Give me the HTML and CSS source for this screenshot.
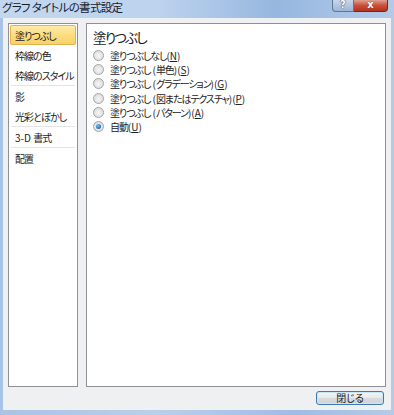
FILE: index.html
```html
<!DOCTYPE html>
<html lang="ja">
<head>
<meta charset="utf-8">
<link rel="stylesheet" href="styles.css">
</head>
<body>
<div class="window">
  <div class="titlebar">
    <span class="title">グラフ タイトルの書式設定</span>
    <div class="caption-buttons">
      <div class="cap help">?</div>
      <div class="cap close">x</div>
    </div>
  </div>
  <div class="content">
    <div class="panels">
      <ul class="nav">
        <li class="item active">塗りつぶし</li>
        <li class="item">枠線の色</li>
        <li class="item">枠線のスタイル</li>
        <li class="sep"></li>
        <li class="item">影</li>
        <li class="item">光彩とぼかし</li>
        <li class="sep"></li>
        <li class="item"><span class="lat">3-D </span>書式</li>
        <li class="sep"></li>
        <li class="item">配置</li>
      </ul>
      <div class="main">
        <div class="heading">塗りつぶし</div>
        <div class="options">
          <div class="opt"><span class="radio"></span><span>塗りつぶしなし<span class="lat">(<u>N</u>)</span></span></div>
          <div class="opt"><span class="radio"></span><span>塗りつぶし<span class="lat"> (</span>単色<span class="lat">)(<u>S</u>)</span></span></div>
          <div class="opt"><span class="radio"></span><span>塗りつぶし<span class="lat"> (</span>グラデーション<span class="lat">)(<u>G</u>)</span></span></div>
          <div class="opt"><span class="radio"></span><span>塗りつぶし<span class="lat"> (</span>図またはテクスチャ<span class="lat">)(<u>P</u>)</span></span></div>
          <div class="opt"><span class="radio"></span><span>塗りつぶし<span class="lat"> (</span>パターン<span class="lat">)(<u>A</u>)</span></span></div>
          <div class="opt"><span class="radio checked"></span><span>自動<span class="lat">(<u>U</u>)</span></span></div>
        </div>
      </div>
    </div>
    <div class="footer">
      <button class="btn">閉じる</button>
    </div>
  </div>
</div>
</body>
</html>
```
FILE: styles.css
```css
* { box-sizing: border-box; }
html, body { margin: 0; padding: 0; }
body {
  width: 394px;
  height: 415px;
  overflow: hidden;
  font-family: "Noto Sans CJK JP", "Noto Sans", sans-serif;
  font-feature-settings: "palt";
  color: #1a1a1a;
}
.window {
  width: 394px;
  height: 415px;
  display: flex;
  flex-direction: column;
  background: linear-gradient(90deg, #a9c3e4 0%, #b9d0ec 40%, #9fbce2 75%, #b4cbe8 100%);
}
.titlebar {
  height: 18px;
  display: flex;
  align-items: flex-start;
  justify-content: space-between;
  background: linear-gradient(90deg, #c3d7ef 0%, #bdd3ee 40%, #97b7df 70%, #b3cbe9 100%);
}
.title {
  font-size: 11.5px;
  line-height: 14px;
  padding-left: 2px;
  letter-spacing: -0.7px;
  color: #16202c;
}
.caption-buttons {
  display: flex;
  margin-right: 6px;
}
.cap {
  height: 12px;
  border: 1px solid #5f7895;
  border-top: none;
  color: #fff;
  font-weight: bold;
  font-family: "DejaVu Sans", sans-serif;
  font-size: 10px;
  line-height: 10px;
  text-align: center;
}
.help {
  width: 22px;
  border-radius: 0 0 0 4px;
  background: linear-gradient(#c6d6ea, #9eb6d4);
  text-shadow: 0 0 1px #2a3d58, 0 0 1px #2a3d58;
}
.close {
  width: 34px;
  border-left: none;
  border-color: #6b2a20;
  border-radius: 0 0 4px 0;
  background: linear-gradient(#e0a090, #c75038 50%, #b8321c);
  text-shadow: 0 0 1px #5a1a10;
}
.content {
  flex: 1;
  margin: 0 3px 5px 3px;
  background: #eff0f1;
  display: flex;
  flex-direction: column;
  padding: 5px 5px 5px 5px;
}
.panels {
  height: 364px;
  display: flex;
  gap: 8px;
}
.nav {
  list-style: none;
  margin: 0;
  padding: 1px 1px 0 1px;
  width: 70px;
  background: #fff;
  border: 1px solid #8f8f94;
  font-size: 10px;
  letter-spacing: -1px;
}
.item {
  height: 20px;
  line-height: 20px;
  padding-left: 4px;
  white-space: nowrap;
  border: 1px solid transparent;
  color: #222;
}
.item.active {
  background: linear-gradient(#fdeba8, #fbdc7e 55%, #f8d068);
  border-color: #e2b44c;
  border-radius: 2px;
}
.lat {
  letter-spacing: 0;
  white-space: pre;
}
.sep {
  height: 1px;
  margin: 0 1px;
  background: #e4e4e4;
}
.main {
  width: 300px;
  background: #fff;
  border: 1px solid #8f8f94;
  padding: 3px 0 0 6px;
}
.heading {
  font-size: 13.5px;
  line-height: 20px;
  letter-spacing: -1.8px;
  color: #1a1a1a;
}
.options {
  display: flex;
  flex-direction: column;
  padding-top: 1px;
}
.opt {
  height: 14.3px;
  display: flex;
  align-items: center;
  font-size: 10px;
  letter-spacing: -1.1px;
  white-space: nowrap;
  color: #222;
}
.opt u { text-underline-offset: 1px; }
.radio {
  width: 11px;
  height: 11px;
  border-radius: 50%;
  border: 1px solid #a4a4a4;
  background: radial-gradient(circle at 50% 55%, #f6f6f6 0%, #e2e2e2 60%, #d6d6d6 100%);
  margin: 0 6px 0 0;
  flex: none;
  position: relative;
}
.radio.checked::after {
  content: "";
  position: absolute;
  left: 2px;
  top: 2px;
  width: 5px;
  height: 5px;
  border-radius: 50%;
  background: radial-gradient(circle at 40% 35%, #7cc2f0, #1a6fb8 70%, #0d4f90);
}
.footer {
  display: flex;
  justify-content: flex-end;
  padding-top: 4px;
  padding-right: 2px;
}
.btn {
  width: 68px;
  height: 14px;
  padding: 0;
  font-family: inherit;
  font-feature-settings: "palt";
  font-size: 10px;
  line-height: 12px;
  color: #1a1a1a;
  border: 1px solid #3a7bb0;
  border-radius: 3px;
  background: linear-gradient(#f4f4f4, #e9e9e9 50%, #d9dade 51%, #d2d4d8);
  box-shadow: inset 0 0 0 1px #c8e6f6;
}
```
